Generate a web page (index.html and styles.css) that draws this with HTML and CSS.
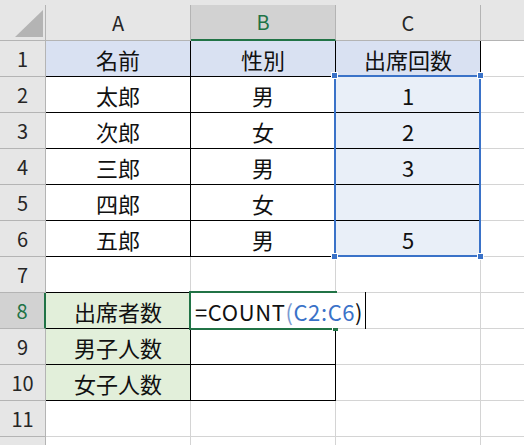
FILE: index.html
```html
<!DOCTYPE html>
<html lang="ja">
<head>
<meta charset="utf-8">
<title>Sheet</title>
<link rel="stylesheet" href="styles.css">
</head>
<body>
<div class="sheet">
  <div class="c ch corner"><svg class="tri" width="28" height="27" viewBox="0 0 28 27"><polygon points="0,27 28,27 28,0" fill="#b4b4b4"/></svg></div>
  <div class="c ch">A</div>
  <div class="c ch sel">B</div>
  <div class="c ch">C</div>
  <div class="c ch last"></div>

  <div class="c rh">1</div>
  <div class="c bk hd">名前</div>
  <div class="c bk hd">性別</div>
  <div class="c bk hd">出席回数</div>
  <div class="c last"></div>

  <div class="c rh">2</div>
  <div class="c bk">太郎</div>
  <div class="c bk">男</div>
  <div class="c bk rng">1</div>
  <div class="c last"></div>

  <div class="c rh">3</div>
  <div class="c bk">次郎</div>
  <div class="c bk">女</div>
  <div class="c bk rng">2</div>
  <div class="c last"></div>

  <div class="c rh">4</div>
  <div class="c bk">三郎</div>
  <div class="c bk">男</div>
  <div class="c bk rng">3</div>
  <div class="c last"></div>

  <div class="c rh">5</div>
  <div class="c bk">四郎</div>
  <div class="c bk">女</div>
  <div class="c bk rng"></div>
  <div class="c last"></div>

  <div class="c rh">6</div>
  <div class="c bk">五郎</div>
  <div class="c bk">男</div>
  <div class="c bk rng">5</div>
  <div class="c last"></div>

  <div class="c rh">7</div>
  <div class="c bkb"></div>
  <div class="c bkb"></div>
  <div class="c"></div>
  <div class="c last"></div>

  <div class="c rh sel">8</div>
  <div class="c bk gr">出席者数</div>
  <div class="c bk"></div>
  <div class="c"></div>
  <div class="c last"></div>

  <div class="c rh">9</div>
  <div class="c bk gr">男子人数</div>
  <div class="c bk"></div>
  <div class="c"></div>
  <div class="c last"></div>

  <div class="c rh">10</div>
  <div class="c bk gr">女子人数</div>
  <div class="c bk"></div>
  <div class="c"></div>
  <div class="c last"></div>

  <div class="c rh">11</div>
  <div class="c"></div>
  <div class="c"></div>
  <div class="c"></div>
  <div class="c last"></div>

  <div class="c rh end"></div>
  <div class="c end"></div>
  <div class="c end"></div>
  <div class="c end"></div>
  <div class="c end last"></div>

  <div class="range">
    <span class="hdl hdl-tl"></span>
    <span class="hdl hdl-tr"></span>
    <span class="hdl hdl-bl"></span>
    <span class="hdl hdl-br"></span>
  </div>
  <div class="active"><span class="ahdl"></span></div>
  <div class="editor"><span class="blk">=COUNT</span><span class="par">(</span><span class="ref">C2:C6</span><span class="blk">)</span><span class="caret"></span></div>
</div>
</body>
</html>
```

FILE: styles.css
```css
html, body {
  margin: 0;
  padding: 0;
  width: 524px;
  height: 445px;
  overflow: hidden;
  background: #ffffff;
}

.sheet {
  position: relative;
  display: grid;
  grid-template-columns: 46px 145px 145px 145px 1fr;
  grid-template-rows: repeat(12, 36px) 8px;
  padding-top: 5px;
  background: #e6e6e6;
  width: 524px;
  height: 445px;
  box-sizing: border-box;
  overflow: hidden;
  font-family: "Noto Sans CJK JP", "Noto Sans", sans-serif;
  color: #111;
}

.c {
  box-sizing: border-box;
  border-right: 1px solid #d4d4d4;
  border-bottom: 1px solid #d4d4d4;
  background: #ffffff;
  display: flex;
  align-items: center;
  justify-content: center;
  font-size: 22px;
  line-height: 1;
  white-space: nowrap;
}

.last { border-right: none; }
.end { border-bottom: none; }

.ch, .rh {
  background: #e6e6e6;
  border-right-color: #b4b4b4;
  border-bottom-color: #b4b4b4;
  font-size: 20px;
  color: #262626;
}

.corner {
  justify-content: flex-end;
  align-items: flex-end;
  padding: 0 2px 3px 0;
}

.tri { display: block; }

.ch.sel {
  background: #d2d2d2;
  color: #217346;
  border-bottom: 2px solid #217346;
}

.rh.sel {
  background: #d2d2d2;
  color: #217346;
  border-right: 2px solid #217346;
}

.bk {
  border-right-color: #000;
  border-bottom-color: #000;
}

.bkb { border-bottom-color: #000; }

.hd { background: #d9e1f2; }
.rng { background: #e9eff8; }
.gr { background: #e2efda; }

.range {
  position: absolute;
  left: 334px;
  top: 75px;
  width: 147px;
  height: 182px;
  box-sizing: border-box;
  border: 2px solid #3a72c8;
}

.hdl {
  position: absolute;
  width: 5px;
  height: 5px;
  background: #3a72c8;
  border: 1px solid #ffffff;
}
.hdl-tl { left: -5px; top: -5px; }
.hdl-tr { right: -5px; top: -5px; }
.hdl-bl { left: -5px; bottom: -5px; }
.hdl-br { right: -5px; bottom: -5px; }

.active {
  position: absolute;
  left: 189px;
  top: 291px;
  width: 148px;
  height: 39px;
  box-sizing: border-box;
  border: 2px solid #217346;
  border-right: none;
}

.ahdl {
  position: absolute;
  right: -1px;
  bottom: -3px;
  width: 5px;
  height: 4px;
  background: #217346;
  border-left: 1px solid #fff;
}

.editor {
  position: absolute;
  left: 191px;
  top: 293px;
  height: 35px;
  display: flex;
  align-items: center;
  padding-left: 4px;
  background: #ffffff;
  font-family: "Noto Sans CJK JP", "Noto Sans", sans-serif;
  font-size: 22px;
  line-height: 1;
  letter-spacing: 0.6px;
  white-space: nowrap;
}

.blk { color: #111; }
.par { color: #7c9bd2; }
.ref { color: #3a72c8; }

.caret {
  align-self: stretch;
  width: 1px;
  margin-left: 2px;
  margin-top: -1px;
  margin-bottom: -1px;
  background: #000;
}
```
